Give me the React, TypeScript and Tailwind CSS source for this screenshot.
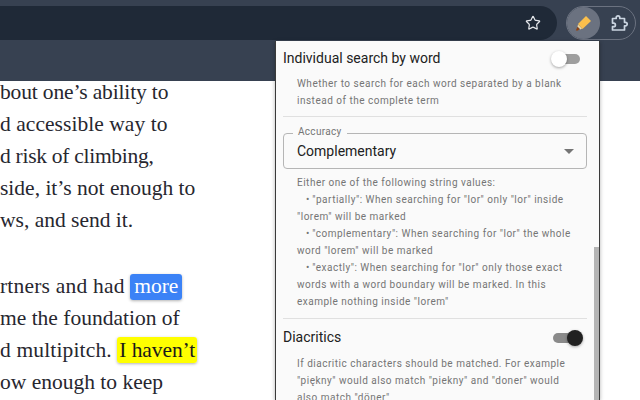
import { Star } from 'lucide-react';

const articleTop = [
  { text: 'bout one’s ability to', className: 'tracking-[-0.15px]' },
  { text: 'd accessible way to', className: 'tracking-[0.05px]' },
  { text: 'd risk of climbing,', className: 'tracking-[-0.28px]' },
  { text: 'side, it’s not enough to', className: '' },
  { text: 'ws, and send it.', className: '' },
];

function Toggle({ on }: { on?: boolean }) {
  return (
    <div className="relative h-[16px] w-[30px] shrink-0">
      <div className={`absolute top-[3px] right-[1px] h-[10px] w-[28px] rounded-full ${on ? 'bg-[#8a8a8a]' : 'bg-[#9e9e9e]'}`} />
      <div
        className={`absolute top-0 h-[16px] w-[16px] rounded-full ${
          on ? 'right-[-1px] bg-[#212121]' : 'left-0 bg-white'
        } shadow-[0_1px_3px_rgba(0,0,0,0.35)]`}
      />
    </div>
  );
}

function Description({ lines }: { lines: string[] }) {
  return (
    <div className="pl-[14px] text-[10px] leading-[17px] tracking-[0.5px] whitespace-nowrap text-[#757575]">
      {lines.map((line) => (
        <div key={line}>{line}</div>
      ))}
    </div>
  );
}

function Popup() {
  return (
    <div className="absolute top-[41px] left-[275px] h-[359px] w-[325px] overflow-hidden border-x border-[#3a3a3a] bg-[#fafafa] pr-[12px] pl-[7px] font-['Roboto',sans-serif] shadow-[0_1px_4px_rgba(0,0,0,0.3)]">
      <div className="flex h-[34px] items-center justify-between pt-[1px] pr-[6px]">
        <span className="text-[14px] text-[#212121]">Individual search by word</span>
        <Toggle />
      </div>
      <Description
        lines={['Whether to search for each word separated by a blank', 'instead of the complete term']}
      />
      <div className="mt-[7px] h-px bg-[#e0e0e0]" />

      <div className="relative mt-[16px] flex h-[36px] items-center justify-between rounded-[4px] border border-[#b5b5b5] pr-[12px] pl-[13px]">
        <span className="absolute top-[-8px] left-[9px] bg-[#fafafa] px-[5px] text-[10px] leading-[12px] tracking-[0.3px] text-[#757575]">
          Accuracy
        </span>
        <span className="text-[14px] text-[#212121]">Complementary</span>
        <svg width="10" height="5" viewBox="0 0 10 5" className="mt-[1px]">
          <path d="M0 0h10L5 5z" fill="#757575" />
        </svg>
      </div>

      <div className="mt-[5px]">
        <Description
          lines={[
            'Either one of the following string values:',
            '\u00a0\u00a0\u00a0•\u2009"partially": When searching for "lor" only "lor" inside',
            '"lorem" will be marked',
            '\u00a0\u00a0\u00a0•\u2009"complementary": When searching for "lor" the whole',
            'word "lorem" will be marked',
            '\u00a0\u00a0\u00a0•\u2009"exactly": When searching for "lor" only those exact',
            'words with a word boundary will be marked. In this',
            'example nothing inside "lorem"',
          ]}
        />
      </div>
      <div className="mt-[8px] h-px bg-[#e0e0e0]" />

      <div className="flex h-[36px] items-center justify-between pt-[1px] pr-[5px]">
        <span className="text-[14px] text-[#212121]">Diacritics</span>
        <Toggle on />
      </div>
      <Description
        lines={[
          'If diacritic characters should be matched. For example',
          '"piękny" would also match "piekny" and "doner" would',
          'also match "döner"',
        ]}
      />

      <div className="absolute top-[206px] right-0 bottom-0 w-[5px] bg-[#b4b4b4]" />
    </div>
  );
}

export default function App() {
  return (
    <div className="relative h-[400px] w-[640px] overflow-hidden bg-white">
      <div className="bg-[#374151]">
        <div className="flex h-[81px] flex-col">
          <div className="h-[6px] shrink-0" />
          <div className="flex h-[34px] shrink-0 items-center">
            <div className="flex h-full w-[557px] items-center justify-end rounded-r-[17px] bg-[#1f2937] pr-[16px]">
              <Star size={16} strokeWidth={1.8} className="text-[#e5e7eb]" />
            </div>
            <div className="ml-[9px] flex h-full w-[70px] items-center rounded-full border border-[#6b7280]">
              <div className="flex h-full w-[33px] items-center justify-center rounded-full bg-[#6b7280]">
                <svg width="20" height="20" viewBox="0 0 20 20">
                  <path d="M12 3 17 8 8.500 16 4 11z" fill="#fbbf4c" />
                  <path d="M4 11.500 8 15.500 6.500 16.500 3.500 13.500z" fill="#f3d9a0" />
                  <path d="M3.500 14 5.500 16 4 17.500 1.800 17.500z" fill="#92400e" />
                </svg>
              </div>
              <div className="flex flex-1 items-center justify-center pl-[3px]">
                <svg width="20" height="20" viewBox="0 0 20 20" fill="none" stroke="#cbd5e1" strokeWidth="1.700" strokeLinejoin="round">
                  <path d="M3.500 5.500h3.700V4.700a1.800 1.800 0 0 1 3.600 0v.8h4.700v3.800h.9a1.800 1.800 0 0 1 0 3.600h-.9v4.100H3.500v-3.300h1.100a1.800 1.800 0 0 0 0-3.600H3.500z" />
                </svg>
              </div>
            </div>
          </div>
        </div>
      </div>

      <div className="mt-[-5px] whitespace-nowrap font-['Liberation_Serif',serif] text-[21.5px] leading-[32px] text-[#27272f]">
        {articleTop.map((line) => (
          <div key={line.text} className={line.className}>
            {line.text}
          </div>
        ))}
        <div className="mt-[34px]">
          <div>
            <span className="tracking-[0.2px]">rtners and had </span>
            <span className="rounded-[3px] bg-[#3b82f6] px-[4px] pt-0 pb-[2px] text-white shadow-[0_1px_3px_rgba(0,0,0,0.3)]">
              more
            </span>
          </div>
          <div>me the foundation of</div>
          <div>
            <span className="tracking-[0.15px]">d multipitch. </span>
            <span className="rounded-[3px] bg-[#ffff00] px-[2px] py-[1px] tracking-[-0.1px] text-[#1a1a1a] shadow-[0_1px_3px_rgba(0,0,0,0.3)]">
              I haven’t
            </span>
          </div>
          <div>ow enough to keep</div>
        </div>
      </div>

      <Popup />
    </div>
  );
}
